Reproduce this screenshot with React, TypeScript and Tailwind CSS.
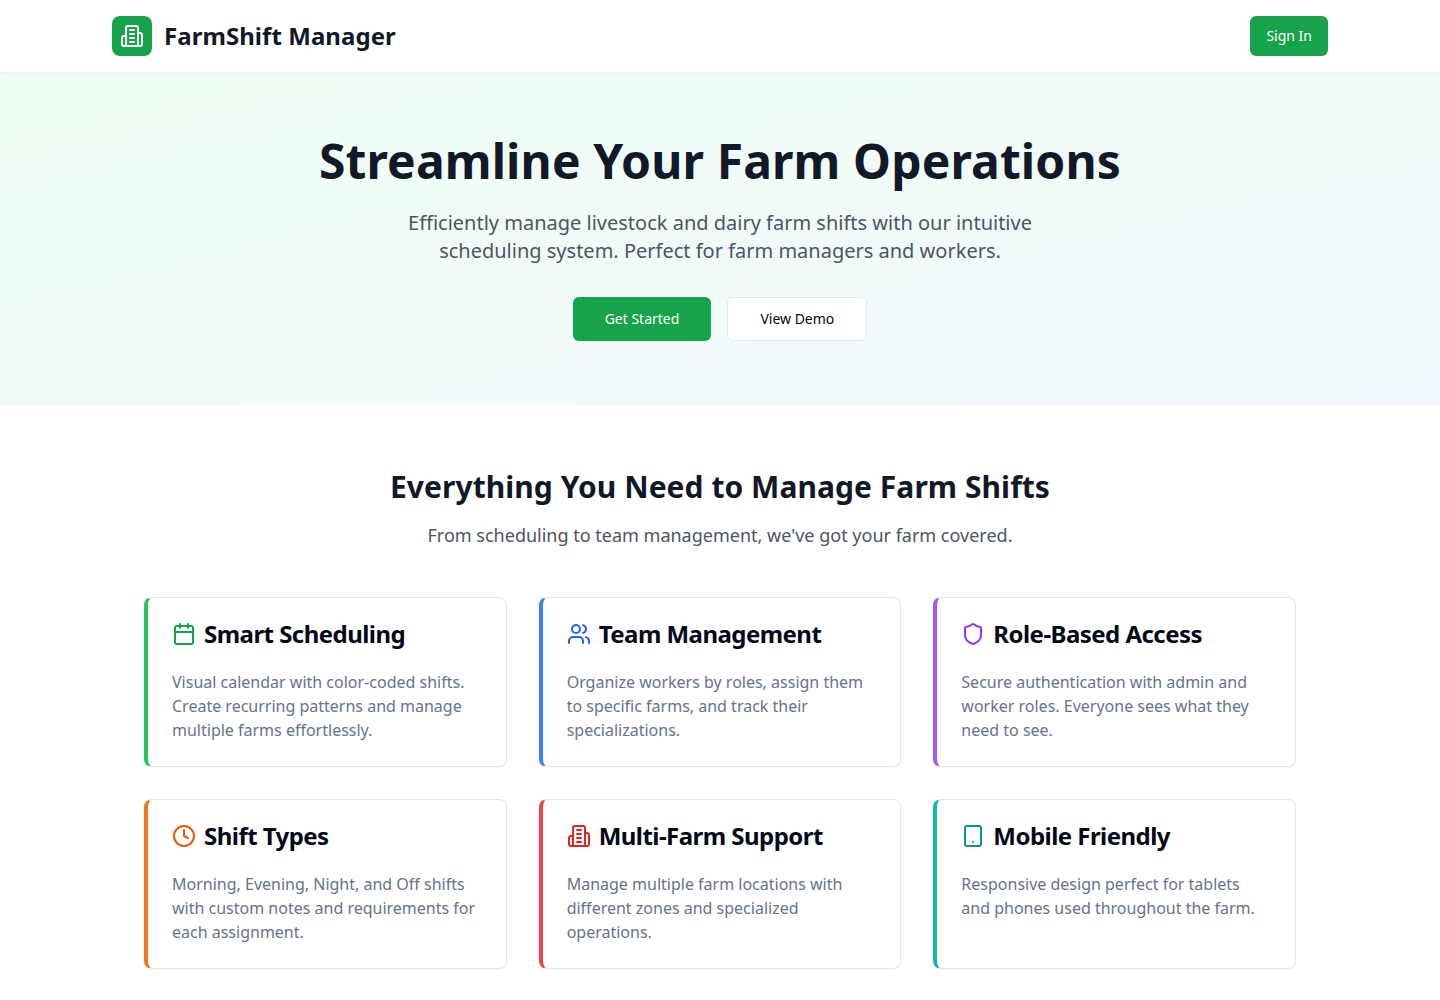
import { Calendar, Clock, Shield, Tablet, Users } from "lucide-react";
import type { ReactNode } from "react";

function FarmIcon({ className }: { className?: string }) {
  return (
    <svg
      viewBox="0 0 24 24"
      fill="none"
      stroke="currentColor"
      strokeWidth={2}
      strokeLinecap="round"
      strokeLinejoin="round"
      className={className}
    >
      <path d="M6 22V4a2 2 0 0 1 2-2h8a2 2 0 0 1 2 2v18Z" />
      <path d="M6 12H4a2 2 0 0 0-2 2v6a2 2 0 0 0 2 2h2" />
      <path d="M18 9h2a2 2 0 0 1 2 2v9a2 2 0 0 1-2 2h-2" />
      <path d="M10 6h4" />
      <path d="M10 10h4" />
      <path d="M10 14h4" />
      <path d="M10 18h4" />
    </svg>
  );
}

type Feature = {
  title: string;
  text: string;
  border: string;
  icon: ReactNode;
};

const features: Feature[] = [
  {
    title: "Smart Scheduling",
    text: "Visual calendar with color-coded shifts. Create recurring patterns and manage multiple farms effortlessly.",
    border: "border-l-[#22c55e]",
    icon: <Calendar className="h-6 w-6 text-[#16a34a]" />,
  },
  {
    title: "Team Management",
    text: "Organize workers by roles, assign them to specific farms, and track their specializations.",
    border: "border-l-[#3b82f6]",
    icon: <Users className="h-6 w-6 text-[#2563eb]" />,
  },
  {
    title: "Role-Based Access",
    text: "Secure authentication with admin and worker roles. Everyone sees what they need to see.",
    border: "border-l-[#a855f7]",
    icon: <Shield className="h-6 w-6 text-[#9333ea]" />,
  },
  {
    title: "Shift Types",
    text: "Morning, Evening, Night, and Off shifts with custom notes and requirements for each assignment.",
    border: "border-l-[#f97316]",
    icon: <Clock className="h-6 w-6 text-[#ea580c]" />,
  },
  {
    title: "Multi-Farm Support",
    text: "Manage multiple farm locations with different zones and specialized operations.",
    border: "border-l-[#ef4444]",
    icon: <FarmIcon className="h-6 w-6 text-[#dc2626]" />,
  },
  {
    title: "Mobile Friendly",
    text: "Responsive design perfect for tablets and phones used throughout the farm.",
    border: "border-l-[#14b8a6]",
    icon: <Tablet className="h-6 w-6 text-[#0d9488]" />,
  },
];

function FeatureCard({ feature }: { feature: Feature }) {
  return (
    <div
      className={`rounded-lg border border-l-4 border-[#e5e7eb] bg-white p-6 text-[#020817] shadow-[0_1px_2px_rgba(0,0,0,0.04)] ${feature.border}`}
    >
      <div className="mb-6 flex items-center gap-2">
        {feature.icon}
        <h3 className="text-2xl leading-none font-bold tracking-[-0.0225em]">{feature.title}</h3>
      </div>
      <p className="text-base text-[#64748b]">{feature.text}</p>
    </div>
  );
}

export default function App() {
  return (
    <div className="min-h-screen bg-white font-['Noto_Sans',sans-serif]">
      <header className="relative z-10 border-b border-[#f3f4f6] bg-white shadow-[0_1px_2px_rgba(0,0,0,0.05)]">
        <div className="mx-auto flex h-[72px] max-w-7xl items-center justify-between px-8">
          <div className="flex items-center gap-3">
            <div className="flex h-10 w-10 items-center justify-center rounded-lg bg-[#16a34a]">
              <FarmIcon className="h-6 w-6 text-white" />
            </div>
            <span className="text-2xl font-bold tracking-[0.0025em] text-[#111827]">FarmShift Manager</span>
          </div>
          <button className="h-10 rounded-md bg-[#16a34a] px-4 text-sm text-white">Sign In</button>
        </div>
      </header>

      <section className="bg-gradient-to-br from-[#f0fdf4] to-[#f0f9fd] py-16 text-center">
        <h1 className="mb-6 text-5xl leading-none font-bold tracking-[0.0025em] text-[#111827]">
          Streamline Your Farm Operations
        </h1>
        <p className="mx-auto mb-8 max-w-2xl text-xl text-[#4b5563]">
          Efficiently manage livestock and dairy farm shifts with our intuitive scheduling system. Perfect for farm
          managers and workers.
        </p>
        <div className="flex justify-center gap-4">
          <button className="h-11 rounded-md bg-[#16a34a] px-8 text-sm text-white">Get Started</button>
          <button className="h-11 rounded-md border border-[#e2e8f0] bg-white px-8 text-sm text-[#020817]">
            View Demo
          </button>
        </div>
      </section>

      <section className="py-16">
        <div className="mx-auto max-w-6xl">
          <div className="mb-12 text-center">
            <h2 className="mb-4 text-3xl font-bold tracking-[0.0016em] text-[#111827]">
              Everything You Need to Manage Farm Shifts
            </h2>
            <p className="text-lg text-[#4b5563]">From scheduling to team management, we've got your farm covered.</p>
          </div>
          <div className="grid grid-cols-3 gap-8">
            {features.map((feature) => (
              <FeatureCard key={feature.title} feature={feature} />
            ))}
          </div>
        </div>
      </section>
    </div>
  );
}
